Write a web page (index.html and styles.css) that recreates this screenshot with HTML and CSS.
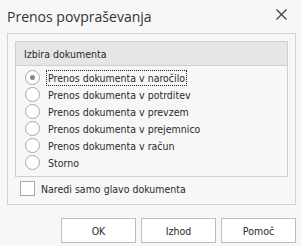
FILE: index.html
```html
<!DOCTYPE html>
<html>
<head>
<meta charset="utf-8">
<link rel="stylesheet" href="styles.css">
</head>
<body>
<div class="dialog">
  <div class="titlebar">
    <span class="title">Prenos povpraševanja</span>
    <svg class="close" width="11" height="11" viewBox="0 0 11 11"><path d="M0.5 0.5 L10.5 10.5 M10.5 0.5 L0.5 10.5" stroke="#444" stroke-width="1.4" fill="none"/></svg>
  </div>
  <div class="panel">
    <div class="group">
      <div class="group-head">Izbira dokumenta</div>
      <div class="group-body">
        <div class="radio-row"><span class="radio checked"></span><span class="label focus">Prenos dokumenta v naročilo</span></div>
        <div class="radio-row"><span class="radio"></span><span class="label">Prenos dokumenta v potrditev</span></div>
        <div class="radio-row"><span class="radio"></span><span class="label">Prenos dokumenta v prevzem</span></div>
        <div class="radio-row"><span class="radio"></span><span class="label">Prenos dokumenta v prejemnico</span></div>
        <div class="radio-row"><span class="radio"></span><span class="label">Prenos dokumenta v račun</span></div>
        <div class="radio-row"><span class="radio"></span><span class="label">Storno</span></div>
      </div>
    </div>
    <div class="check-row"><span class="checkbox"></span><span class="label">Naredi samo glavo dokumenta</span></div>
  </div>
  <div class="buttons">
    <div class="btn">OK</div>
    <div class="btn">Izhod</div>
    <div class="btn">Pomoč</div>
  </div>
</div>
</body>
</html>
```
FILE: styles.css
```css
html, body {
  margin: 0;
  padding: 0;
  background: #f7f7f7;
}
.dialog {
  width: 301px;
  height: 246px;
  box-sizing: border-box;
  padding: 0 5px 0 7px;
  font-family: "DejaVu Sans Condensed", "DejaVu Sans", sans-serif;
  font-stretch: condensed;
  font-size: 10.5px;
  color: #2a2a2a;
}
.titlebar {
  height: 33px;
  display: flex;
  align-items: center;
  justify-content: space-between;
}
.title {
  font-family: "Open Sans", sans-serif;
  font-stretch: normal;
  font-size: 14px;
  color: #333;
  margin-top: -1px;
}
.close {
  margin-right: 9px;
  margin-top: -4px;
}
.panel {
  border: 1px solid #d2d2d2;
  height: 172px;
  box-sizing: border-box;
  padding: 7px 7px 0 7px;
}
.group {
  border: 1px solid #cfcfcf;
  height: 136px;
  box-sizing: border-box;
}
.group-head {
  height: 23px;
  background: #e6e6e6;
  border-bottom: 1px solid #cfcfcf;
  display: flex;
  align-items: center;
  padding-left: 8px;
}
.group-body {
  padding: 3px 0 0 9px;
}
.radio-row {
  height: 17px;
  display: flex;
  align-items: center;
}
.radio {
  width: 13px;
  height: 13px;
  border: 1px solid #a8a8a8;
  border-radius: 50%;
  background: #fff;
  position: relative;
  margin-right: 6px;
  flex: none;
}
.radio.checked::after {
  content: "";
  position: absolute;
  left: 4px;
  top: 4px;
  width: 5px;
  height: 5px;
  border-radius: 50%;
  background: #888;
}
.label {
  padding: 0 1px;
  line-height: 14px;
  border: 1px solid transparent;
}
.label.focus {
  border: 1px dotted #222;
}
.check-row {
  display: flex;
  align-items: center;
  margin-top: 4px;
  padding-left: 5px;
  height: 15px;
}
.checkbox {
  width: 13px;
  height: 13px;
  border: 1px solid #a8a8a8;
  background: #fff;
  margin-right: 4px;
  flex: none;
}
.buttons {
  display: flex;
  justify-content: flex-end;
  gap: 5px;
  margin-top: 13px;
}
.btn {
  width: 75px;
  height: 25px;
  box-sizing: border-box;
  border: 1px solid #bdbdbd;
  background: #fff;
  display: flex;
  align-items: center;
  justify-content: center;
}
```
